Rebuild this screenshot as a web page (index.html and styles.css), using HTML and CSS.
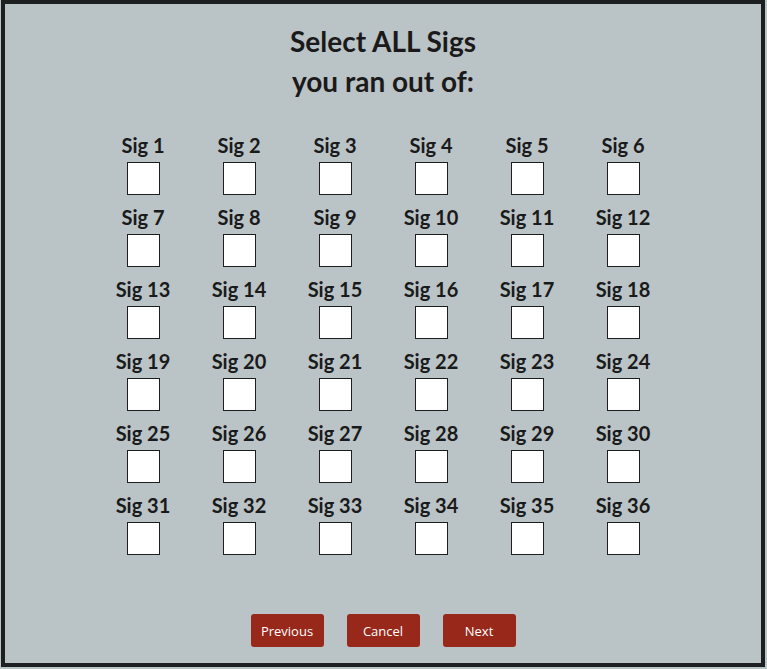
FILE: index.html
```html
<!DOCTYPE html>
<html lang="en">
<head>
<meta charset="utf-8">
<title>Select Sigs</title>
<link rel="stylesheet" href="styles.css">
</head>
<body>
<div class="frame">
  <h1 class="title">Select ALL Sigs<br>you ran out of:</h1>
  <div class="grid">
    <label class="cell"><span class="name">Sig 1</span><input type="checkbox" class="box"></label>
    <label class="cell"><span class="name">Sig 2</span><input type="checkbox" class="box"></label>
    <label class="cell"><span class="name">Sig 3</span><input type="checkbox" class="box"></label>
    <label class="cell"><span class="name">Sig 4</span><input type="checkbox" class="box"></label>
    <label class="cell"><span class="name">Sig 5</span><input type="checkbox" class="box"></label>
    <label class="cell"><span class="name">Sig 6</span><input type="checkbox" class="box"></label>
    <label class="cell"><span class="name">Sig 7</span><input type="checkbox" class="box"></label>
    <label class="cell"><span class="name">Sig 8</span><input type="checkbox" class="box"></label>
    <label class="cell"><span class="name">Sig 9</span><input type="checkbox" class="box"></label>
    <label class="cell"><span class="name">Sig 10</span><input type="checkbox" class="box"></label>
    <label class="cell"><span class="name">Sig 11</span><input type="checkbox" class="box"></label>
    <label class="cell"><span class="name">Sig 12</span><input type="checkbox" class="box"></label>
    <label class="cell"><span class="name">Sig 13</span><input type="checkbox" class="box"></label>
    <label class="cell"><span class="name">Sig 14</span><input type="checkbox" class="box"></label>
    <label class="cell"><span class="name">Sig 15</span><input type="checkbox" class="box"></label>
    <label class="cell"><span class="name">Sig 16</span><input type="checkbox" class="box"></label>
    <label class="cell"><span class="name">Sig 17</span><input type="checkbox" class="box"></label>
    <label class="cell"><span class="name">Sig 18</span><input type="checkbox" class="box"></label>
    <label class="cell"><span class="name">Sig 19</span><input type="checkbox" class="box"></label>
    <label class="cell"><span class="name">Sig 20</span><input type="checkbox" class="box"></label>
    <label class="cell"><span class="name">Sig 21</span><input type="checkbox" class="box"></label>
    <label class="cell"><span class="name">Sig 22</span><input type="checkbox" class="box"></label>
    <label class="cell"><span class="name">Sig 23</span><input type="checkbox" class="box"></label>
    <label class="cell"><span class="name">Sig 24</span><input type="checkbox" class="box"></label>
    <label class="cell"><span class="name">Sig 25</span><input type="checkbox" class="box"></label>
    <label class="cell"><span class="name">Sig 26</span><input type="checkbox" class="box"></label>
    <label class="cell"><span class="name">Sig 27</span><input type="checkbox" class="box"></label>
    <label class="cell"><span class="name">Sig 28</span><input type="checkbox" class="box"></label>
    <label class="cell"><span class="name">Sig 29</span><input type="checkbox" class="box"></label>
    <label class="cell"><span class="name">Sig 30</span><input type="checkbox" class="box"></label>
    <label class="cell"><span class="name">Sig 31</span><input type="checkbox" class="box"></label>
    <label class="cell"><span class="name">Sig 32</span><input type="checkbox" class="box"></label>
    <label class="cell"><span class="name">Sig 33</span><input type="checkbox" class="box"></label>
    <label class="cell"><span class="name">Sig 34</span><input type="checkbox" class="box"></label>
    <label class="cell"><span class="name">Sig 35</span><input type="checkbox" class="box"></label>
    <label class="cell"><span class="name">Sig 36</span><input type="checkbox" class="box"></label>
  </div>
  <div class="actions">
    <button class="btn">Previous</button>
    <button class="btn">Cancel</button>
    <button class="btn">Next</button>
  </div>
</div>
</body>
</html>
```

FILE: styles.css
```css
html, body {
  margin: 0;
  padding: 0;
  background: #bac3c6;
}

.frame {
  box-sizing: border-box;
  width: 764px;
  height: 667px;
  margin-left: 1px;
  border: 4px solid #1e1f21;
  background: #bac3c6;
  padding-top: 17px;
  display: flex;
  flex-direction: column;
  align-items: center;
}

.title {
  margin: 0;
  font-family: Lato, "Liberation Sans", sans-serif;
  font-weight: 700;
  font-size: 28px;
  line-height: 40px;
  color: #1a1a1a;
  text-align: center;
}

.grid {
  margin-top: 32px;
  display: grid;
  grid-template-columns: repeat(6, 96px);
  row-gap: 10px;
}

.cell {
  display: flex;
  flex-direction: column;
  align-items: center;
}

.name {
  font-family: Lato, "Liberation Sans", sans-serif;
  font-weight: 700;
  font-size: 20px;
  line-height: 24px;
  color: #1a1a1a;
  white-space: nowrap;
}

.box {
  appearance: none;
  -webkit-appearance: none;
  box-sizing: border-box;
  width: 33px;
  height: 33px;
  margin: 5px 0 0 0;
  border: 1px solid #1e1e1e;
  background: #ffffff;
  border-radius: 0;
}

.actions {
  margin-top: 59px;
  display: flex;
  gap: 23px;
}

.btn {
  box-sizing: border-box;
  width: 73px;
  height: 33px;
  border: none;
  border-radius: 3px;
  background: #98281a;
  color: #ffffff;
  font-family: "Open Sans", "Liberation Sans", sans-serif;
  font-size: 13px;
  padding: 0;
}
```
